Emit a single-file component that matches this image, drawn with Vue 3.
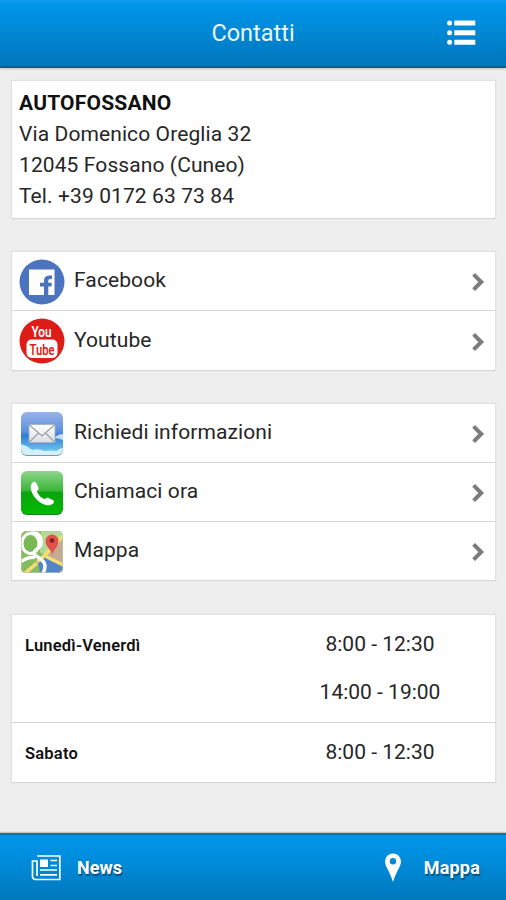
<script setup>
const social = [
  { id: 'facebook', label: 'Facebook' },
  { id: 'youtube', label: 'Youtube' }
]
const actions = [
  { id: 'mail', label: 'Richiedi informazioni' },
  { id: 'phone', label: 'Chiamaci ora' },
  { id: 'map', label: 'Mappa' }
]
const groups = [social, actions]
const hours = [
  { day: 'Lunedì-Venerdì', slots: ['8:00 - 12:30', '14:00 - 19:00'] },
  { day: 'Sabato', slots: ['8:00 - 12:30'] }
]
</script>

<template>
  <div class="screen">
    <header class="header">
      <span class="spacer"></span>
      <h1>Contatti</h1>
      <div class="menu">
        <svg width="30" height="28" viewBox="0 0 30 28" fill="#fff">
          <circle cx="3.6" cy="4" r="2.5" /><circle cx="3.6" cy="13.7" r="2.5" /><circle cx="3.6" cy="23.3" r="2.5" />
          <path d="M8.3 1.5h21v5h-21zM8.3 11.2h21v5h-21zM8.3 20.8h21v5h-21z" />
        </svg>
      </div>
    </header>

    <main class="content">
      <section class="card address">
        <p class="name">AUTOFOSSANO</p>
        <p class="street">Via Domenico Oreglia 32</p>
        <p class="city">12045 Fossano (Cuneo)</p>
        <p class="tel">Tel. +39 0172 63 73 84</p>
      </section>

      <section v-for="(group, g) in groups" :key="g" class="card">
        <div v-for="item in group" :key="item.id" class="row">
          <svg v-if="item.id === 'facebook'" class="icon" viewBox="0 0 46 46">
            <circle cx="23" cy="23" r="22.5" fill="#4c74be" />
            <path d="M10 10.500h25.500v25.500H10z" fill="#fff" />
            <path d="M25 36v-8.500h-4v-3.700h4V22c0-4 2.300-5.500 6-5.500h2v3.500h-1.500c-1.700 0-2.200.8-2.200 2.300v1.500H33l-.6 3.700h-3.100V36z" fill="#4c74be" />
          </svg>
          <svg v-else-if="item.id === 'youtube'" class="icon" viewBox="0 0 46 46">
            <circle cx="23" cy="23" r="22.5" fill="#dc1d18" />
            <text class="logo-text" x="22.5" y="18.8" textLength="20" lengthAdjust="spacingAndGlyphs" fill="#fff">You</text>
            <rect x="7.5" y="21.500" width="31" height="18.500" rx="5" fill="#fff" />
            <text class="logo-text" x="23" y="36.8" textLength="25" lengthAdjust="spacingAndGlyphs" fill="#dc1d18">Tube</text>
          </svg>
          <svg v-else-if="item.id === 'mail'" class="icon" viewBox="0 0 46 46">
            <defs>
              <linearGradient id="sky" x1="0" y1="0" x2="0" y2="1">
                <stop offset="0" stop-color="#9ab2e8" /><stop offset=".45" stop-color="#5b92df" />
                <stop offset=".55" stop-color="#2f7dd6" /><stop offset="1" stop-color="#7ed7f4" />
              </linearGradient>
              <clipPath id="mailClip"><rect x="2" y="1" width="42" height="43" rx="6" /></clipPath>
              <linearGradient id="paper" x1="0" y1="0" x2="0" y2="1">
                <stop offset="0" stop-color="#fff" /><stop offset="1" stop-color="#dadde2" />
              </linearGradient>
            </defs>
            <rect x="2" y="2" width="42" height="43" rx="6" fill="#8293a5" />
            <g clip-path="url(#mailClip)">
              <path d="M2 1h42v43H2z" fill="url(#sky)" />
              <path d="M2 33q7 2 11 6 6-2 12 1 8-1 12 0 4-3 7-3v7H2z" fill="#e1f7fc" opacity=".85" />
              <path d="M35 27q4-4 9-4v6q-5-2-9-2z" fill="#c9dcf5" />
            </g>
            <rect x="10" y="13.5" width="26" height="18" rx="1" fill="url(#paper)" stroke="#a4adb8" stroke-width=".8" />
            <path d="M10.5 14L23 25l12.5-11M10.5 31l9-9M35.5 31l-9-9" fill="none" stroke="#9ca1a8" stroke-width="1.2" />
          </svg>
          <svg v-else-if="item.id === 'phone'" class="icon" viewBox="0 0 46 46">
            <defs>
              <linearGradient id="green" x1="0" y1="0" x2="0" y2="1">
                <stop offset="0" stop-color="#91d58d" /><stop offset=".46" stop-color="#38b636" />
                <stop offset=".5" stop-color="#0aa40d" /><stop offset="1" stop-color="#00bb04" />
              </linearGradient>
            </defs>
            <rect x="2" y="2" width="42" height="43" rx="6" fill="#138219" />
            <rect x="2" y="1" width="42" height="43" rx="6" fill="url(#green)" />
            <path d="M13 13.2c1.6-1.8 3.4-1.8 4.4 0l2 4c.8 1.7-.4 2.8-1.5 3.8.8 3.4 4.3 6.9 7.8 8.2 1.2-1.2 2.8-1.8 4.4-1l4 2c1.5 1 1 2.7-.6 3.8-3 2.2-6.8 1.4-10.5-.5C17.5 30.5 12.8 24.8 11.8 18.5c-.3-2.1.1-3.9 1.2-5.3z" fill="#fff" />
          </svg>
          <svg v-else class="icon" viewBox="0 0 46 46">
            <defs><clipPath id="mapClip"><rect x="2" y="2" width="42" height="42" rx="5" /></clipPath></defs>
            <g clip-path="url(#mapClip)">
              <path d="M2 2h42v42H2z" fill="#86bb60" />
              <path d="M22 2h22v14L28 28l-7-5z" fill="#b4d997" />
              <path d="M27 27L44 9v28z" fill="#c5ac90" />
              <path d="M2 44l8-8 16-8 18 8v8z" fill="#5384c6" />
              <path d="M5 44l21-18L44 7M26 27l18 9" fill="none" stroke="#f5dc74" stroke-width="3.6" />
              <path d="M2 33q8-6 14-3 4 3 5 15H2z" fill="#86bb60" />
              <path d="M4 46l14-12" stroke="#f5dc74" stroke-width="3.6" />
              <ellipse cx="11.5" cy="14.500" rx="8.5" ry="10" fill="#78b956" stroke="#fff" stroke-width="3" />
              <path d="M12 3.500q11 0 10 10.500c0 6-7 6-7 10s11 5 11 13c0 4-1 5-2 7" fill="none" stroke="#fff" stroke-width="3.5" />
              <path d="M2 32.500q8-5 14-4" fill="none" stroke="#fff" stroke-width="3.5" />
            </g>
            <rect x="2.5" y="2.5" width="41" height="41" rx="5" fill="none" stroke="#b7c7ac" stroke-opacity=".7" />
            <path d="M33 26c0-5-6.500-8-6.500-14a6.5 6.5 0 0 1 13 0c0 6-5.500 9-6.500 14z" fill="#e2504b" />
            <circle cx="33" cy="11.500" r="2.300" fill="#7e1f20" />
          </svg>
          <span class="label">{{ item.label }}</span>
          <svg class="chevron" width="14" height="20" viewBox="0 0 14 20">
            <path d="M2.6 2.4L10.2 10l-7.6 7.6" fill="none" stroke="#7b7b7b" stroke-width="4" />
          </svg>
        </div>
      </section>

      <section class="card">
        <div v-for="entry in hours" :key="entry.day" class="hours">
          <div class="day">{{ entry.day }}</div>
          <div class="slots"><span v-for="slot in entry.slots" :key="slot">{{ slot }}</span></div>
        </div>
      </section>
    </main>

    <footer class="footer">
      <div class="tab">
        <svg width="30" height="26" viewBox="0 0 30 26" fill="none" stroke="#fff" stroke-width="1.7">
          <path d="M6 1h22.8v23.5H4.5A3 3 0 0 1 1.5 21.5V6H6v15" />
          <path d="M9 4.5h8V12H9z" fill="#fff" stroke="none" />
          <path d="M19.5 5.5H26M19.5 10.5H26M9 15h17M9 19.8h17" />
        </svg>
        <span class="news">News</span>
      </div>
      <div class="tab">
        <svg width="18" height="30" viewBox="0 0 18 30">
          <path fill="#fff" fill-rule="evenodd" d="M9 .5a8 8 0 0 1 8 8c0 5-4.5 9-8 20.5C5.5 17.500 1 13.500 1 8.500a8 8 0 0 1 8-8zm0 4.600a3.200 3.200 0 1 0 0 6.400 3.200 3.200 0 0 0 0-6.400z" />
        </svg>
        <span class="place">Mappa</span>
      </div>
    </footer>
  </div>
</template>

<style>
body { background: #eee; }
</style>

<style scoped>
.screen {
  box-sizing: border-box;
  height: 900px;
  display: flex;
  flex-direction: column;
  background: #eee;
  color: #262626;
  font-family: Roboto, "Liberation Sans", sans-serif;
  font-size: 21px;
}
.header {
  box-sizing: border-box;
  height: 68px;
  display: grid;
  grid-template-columns: 1fr auto 1fr;
  align-items: center;
  padding: 0 30px;
  background: linear-gradient(#0c9cf3, #0095e9 8%, #0076ba);
  border-bottom: 2px solid #075f95;
  box-shadow: 0 1px 2px #bbb;
}
h1 {
  margin: 0;
  color: #e9f5ff;
  font-size: 23.5px;
  font-weight: 400;
  line-height: 32px;
}
.menu { display: flex; justify-content: flex-end; }
.content {
  flex: 1;
  display: flex;
  flex-direction: column;
  gap: 32px;
  padding: 12px 10px 0 11px;
}
.card {
  background: #fff;
  border: 1px solid #e1e1e1;
  border-bottom-color: #d6d6d6;
  box-shadow: 0 0 1px #ddd;
}
.address { box-sizing: border-box; height: 139px; padding: 7px; }
.address p { margin: 0; line-height: 31px; letter-spacing: .1px; }
.address .name { color: #111; font-weight: 700; letter-spacing: .2px; }
.row {
  box-sizing: border-box;
  height: 59px;
  display: flex;
  align-items: center;
  padding: 0 10px 0 6px;
}
.row:first-child { height: 58px; }
.row:nth-child(2):last-child { height: 60px; }
.row + .row, .hours + .hours { border-top: 1px solid #d4d4d4; }
.icon { width: 46px; height: 46px; margin: 1px 0 0 1px; }
.logo-text {
  font-family: Roboto, sans-serif;
  font-size: 14.5px;
  font-weight: 600;
  text-anchor: middle;
}
.label { flex: 1; margin: -2px 0 0 9px; letter-spacing: .1px; }
.chevron { margin-top: 2px; }
.card:last-child { margin-top: 1px; }
.hours {
  display: grid;
  grid-template-columns: 1fr 230px;
  padding: 5px 0 5px 12px;
  line-height: 48px;
}
.hours:first-child { padding-bottom: 6px; }
.hours:last-child { padding-bottom: 4px; }
.day { padding: 2px 0 0 1px; color: #111; font-size: 16.5px; font-weight: 600; letter-spacing: .2px; }
.slots { display: flex; flex-direction: column; text-align: center; letter-spacing: 0; }
.footer {
  box-sizing: border-box;
  height: 67px;
  display: flex;
  justify-content: space-between;
  align-items: center;
  padding: 0 26px 0 31px;
  background: linear-gradient(#0091e6, #0095e9 8%, #0078bc);
  border-top: 2px solid #0873ad;
  box-shadow: 0 -1px 1px #c4c4c4;
  color: #fff;
  font-size: 18px;
  font-weight: 700;
  text-shadow: 1px 2px 1px #075183;
}
.tab { display: flex; align-items: center; }
.news { margin-left: 16px; }
.place { margin-left: 22px; letter-spacing: .2px; }
</style>
